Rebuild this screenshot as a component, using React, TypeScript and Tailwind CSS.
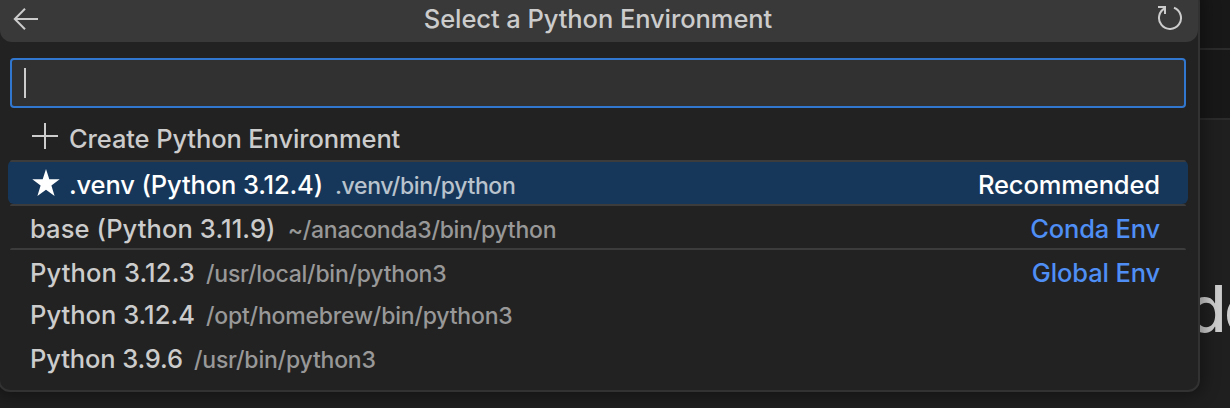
import { ReactNode } from 'react';

type RowProps = {
  label: string;
  labelClass: string;
  path?: string;
  pathClass?: string;
  tag?: string;
  tagClass?: string;
  icon?: ReactNode;
  separated?: boolean;
  selected?: boolean;
};

function PlusIcon() {
  return (
    <svg className="h-7 w-7 shrink-0" viewBox="0 0 28 28" fill="#cccccc" aria-hidden="true">
      <path d="M14 0h2v12h12v2H16v12h-2V14H2v-2h12z" />
    </svg>
  );
}

function StarIcon() {
  return (
    <svg className="h-7 w-7 shrink-0 overflow-visible" viewBox="0 0 28 28" fill="#ffffff" aria-hidden="true">
      <path d="M16 0l3.3 10.2h10.4l-8.3 6.2 3.2 10.6-8.6-6.3L7.4 27l3.2-10.6L2.3 10.2h10.4z" />
    </svg>
  );
}

function BackIcon() {
  return (
    <svg className="h-[22px] w-[26px] overflow-visible" viewBox="0 0 26 22" fill="none" stroke="#cccccc" strokeWidth="2" aria-hidden="true">
      <path d="M25 10H2M12 -.2L1.8 10 12 20.2" />
    </svg>
  );
}

function RefreshIcon() {
  return (
    <svg className="h-[26px] w-[26px]" viewBox="0 0 26 26" fill="none" stroke="#cccccc" strokeWidth="2" aria-hidden="true">
      <path d="M1 2h7v7" />
      <path d="M8.4 3A11 11 0 1 0 17 2.75" />
    </svg>
  );
}

function Row({ label, labelClass, path, pathClass = '', tag, tagClass = '', icon, separated, selected }: RowProps) {
  return (
    <li className={`flex h-11 flex-col rounded-md ${selected ? 'bg-[#17375a] text-white' : 'text-[#cccccc]'}`}>
      {separated && <div className="mx-0.5 h-0.5 shrink-0 rounded-t-sm bg-[#3c3c3c]" />}
      <div className="flex h-[42px] items-start pl-[22px] pr-7 leading-[46px]">
        {icon && <span className="mr-[11px] flex h-[41px] w-7 items-center">{icon}</span>}
        <span className="flex flex-1 items-baseline whitespace-pre">
          <span className={`text-[25.5px] ${labelClass}`}>{label}</span>
          {path && <span className={`text-[23px] ${selected ? 'text-[#b9c3cd]' : 'text-[#989898]'} ${pathClass}`}>{path}</span>}
        </span>
        {tag && <span className={`text-[25.5px] ${selected ? 'text-white' : 'text-[#4f8ff5]'} ${tagClass}`}>{tag}</span>}
      </div>
    </li>
  );
}

export default function App() {
  return (
    <div className="relative flex h-[408px] w-[1230px] overflow-hidden bg-[#1f1f1f] font-['Inter',sans-serif] font-[450]">
      <div className="flex w-full flex-col items-end">
        <div className="h-[50px] w-full border-b-2 border-[#2b2b2b] bg-[#181818]" />
        <div className="h-[70px] w-full border-b-2 border-[#2b2b2b] bg-[#181818]" />
        <div className="mt-[144px] w-[43px] whitespace-nowrap text-[64px] leading-[90px] tracking-[-2.5px] text-[#cccccc]">de</div>
      </div>
      <section className="absolute -left-0.5 top-[-10px] flex h-[402px] w-[1202px] flex-col rounded-xl border-2 border-[#323232] bg-[#222222] shadow-[0_0_16px_4px_rgba(0,0,0,0.36)]">
        <header className="flex h-[50px] shrink-0 items-end justify-between rounded-b-xl bg-[#393939] pb-[11px] pl-[13px] pr-[15px]">
          <BackIcon />
          <h1 className="text-[25.5px] leading-[24px] tracking-[-0.08px] text-[#cccccc]">Select a Python Environment</h1>
          <RefreshIcon />
        </header>
        <div className="mx-[10px] mt-4 flex h-[50px] w-[1176px] shrink-0 items-center rounded border-2 border-[#3277cf] bg-[#313131] pl-3">
          <span className="h-[30px] w-0.5 bg-[#cccccc]" />
        </div>
        <ul className="mx-2 mt-2 w-[1180px]">
          <Row icon={<PlusIcon />} label="Create Python Environment" labelClass="tracking-[-0.12px]" />
          <Row icon={<StarIcon />} label=".venv (Python 3.12.4)" labelClass="tracking-[-0.14px]" path=".venv/bin/python" pathClass="ml-3 tracking-[-0.37px]" tag="Recommended" tagClass="tracking-[-0.12px]" separated selected />
          <Row label="base (Python 3.11.9)" labelClass="tracking-[0.1px]" path="~/anaconda3/bin/python" pathClass="ml-3 tracking-[-0.25px]" tag="Conda Env" tagClass="tracking-[-0.2px]" separated />
          <Row label="Python 3.12.3" labelClass="tracking-[0.13px]" path="/usr/local/bin/python3" pathClass="ml-[11px] tracking-[-0.23px]" tag="Global Env" tagClass="tracking-[-0.14px]" separated />
          <Row label="Python 3.12.4" labelClass="tracking-[0.02px]" path="/opt/homebrew/bin/python3" pathClass="ml-[11px] tracking-[-0.2px]" />
          <Row label="Python 3.9.6" labelClass="tracking-[-0.12px]" path="/usr/bin/python3" pathClass="ml-[11px] tracking-[-0.2px]" />
        </ul>
      </section>
    </div>
  );
}
